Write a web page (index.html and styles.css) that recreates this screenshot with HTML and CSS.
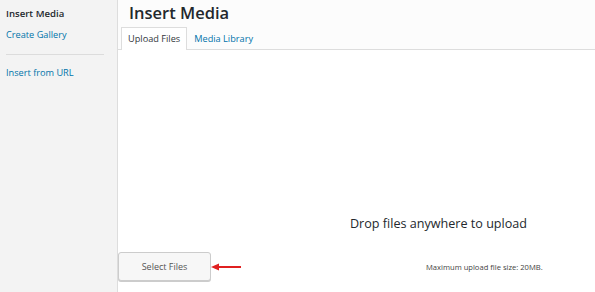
FILE: index.html
```html
<!DOCTYPE html>
<html lang="en">
<head>
  <meta charset="UTF-8" />
  <title>Insert Media</title>
  <link rel="stylesheet" href="styles.css">
</head>
<body>
  <div class="modal">
    <div class="sidebar">
      <div class="menu-item current">Insert Media</div>
      <a class="menu-item" href="#">Create Gallery</a>
      <div class="separator"></div>
      <a class="menu-item" href="#">Insert from URL</a>
    </div>

    <div class="main">
      <div class="header">
        <h1>Insert Media</h1>
        <div class="tabs">
          <span class="tab active">Upload Files</span>
          <a class="tab" href="#">Media Library</a>
        </div>
      </div>

      <div class="content">
        <div class="drop">Drop files anywhere to upload</div>
        <div class="bottom">
          <button class="select-btn">Select Files</button>
          <svg class="arrow" width="31" height="8" viewBox="0 0 31 8">
            <line x1="5" y1="4" x2="30" y2="4" stroke="#e02020" stroke-width="2"/>
            <polygon points="0,4 8,0.5 8,7.5" fill="#e02020"/>
          </svg>
          <div class="max-size">Maximum upload file size: 20MB.</div>
        </div>
      </div>
    </div>
  </div>
</body>
</html>
```

FILE: styles.css
```css
body {
  margin: 0;
  font-family: 'Open Sans', sans-serif;
  background: #ffffff;
  color: #23282d;
}

.modal {
  display: flex;
  height: 292px;
}

.sidebar {
  width: 118px;
  background: #f3f3f3;
  border-right: 1px solid #dddddd;
  padding-top: 7px;
  box-sizing: border-box;
}

.menu-item {
  display: block;
  font-size: 9.2px;
  padding: 0 6px;
  line-height: 14px;
  margin-bottom: 7px;
  color: #0073aa;
  text-decoration: none;
}

.menu-item.current {
  color: #23282d;
  font-weight: 600;
  font-size: 9.6px;
}

.separator {
  height: 1px;
  background: #dcdcdc;
  margin: 12px 13px 11px 6px;
}

.main {
  flex: 1;
  display: flex;
  flex-direction: column;
}

.header {
  background: #fcfcfc;
  border-bottom: 1px solid #dddddd;
  height: 50px;
  box-sizing: border-box;
  display: flex;
  flex-direction: column;
  justify-content: space-between;
}

h1 {
  font-size: 16.5px;
  font-weight: 600;
  margin: 3px 0 0 11px;
  line-height: 20px;
}

.tabs {
  display: flex;
  padding-left: 3px;
  margin-bottom: -1px;
}

.tab {
  font-size: 9.2px;
  line-height: 22px;
  padding: 0 6px;
  color: #0073aa;
  text-decoration: none;
  border: 1px solid transparent;
  border-bottom: none;
}

.tab.active {
  color: #32373c;
  background: #ffffff;
  border-color: #dddddd;
}

.content {
  flex: 1;
  display: flex;
  flex-direction: column;
}

.drop {
  margin-top: 165px;
  margin-left: 164px;
  text-align: center;
  font-size: 12.6px;
  color: #23282d;
}

.bottom {
  margin-top: 20px;
  display: flex;
  align-items: center;
}

.select-btn {
  width: 93px;
  height: 29px;
  font-family: inherit;
  font-size: 9px;
  color: #555555;
  background: #f7f7f7;
  border: 1px solid #cccccc;
  border-radius: 3px;
  box-shadow: 0 1px 0 #cccccc;
  padding: 0;
}

.max-size {
  margin-left: 184px;
  font-size: 7.6px;
  color: #444444;
}
```
